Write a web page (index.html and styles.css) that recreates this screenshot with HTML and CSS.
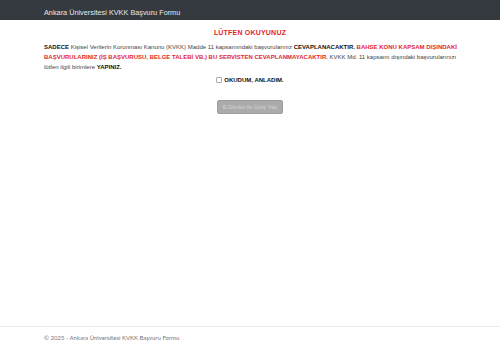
FILE: index.html
```html
<!DOCTYPE html>
<html lang="tr">
<head>
  <meta charset="UTF-8">
  <meta name="viewport" content="width=device-width, initial-scale=1.0">
  <title>Ankara Üniversitesi KVKK Başvuru Formu</title>
  <link rel="stylesheet" href="styles.css">
</head>
<body>

<header class="topbar">
  <div class="wrap">
    <a href="#" class="brand">Ankara Üniversitesi KVKK Başvuru Formu</a>
  </div>
</header>

<main class="wrap content">
  <h1 class="notice-title">LÜTFEN OKUYUNUZ</h1>
  <p class="notice">
    <b>SADECE</b> Kişisel Verilerin Korunması Kanunu (KVKK) Madde 11 kapsamındaki başvurularınız <b>CEVAPLANACAKTIR.</b>
    <b class="red">BAHSE KONU KAPSAM DIŞINDAKİ BAŞVURULARINIZ (İŞ BAŞVURUSU, BELGE TALEBİ VB.) BU SERVİSTEN CEVAPLANMAYACAKTIR.</b>
    KVKK Md. 11 kapsamı dışındaki başvurularınızı lütfen ilgili birimlere <b>YAPINIZ.</b>
  </p>

  <div class="confirm">
    <label><span class="box"></span>OKUDUM, ANLADIM.</label>
  </div>

  <div class="actions">
    <button class="btn-login" disabled>E-Devlet ile Giriş Yap</button>
  </div>
</main>

<footer class="footer">
  <div class="wrap">© 2025 - Ankara Üniversitesi KVKK Başvuru Formu</div>
</footer>

</body>
</html>
```

FILE: styles.css
```css
:root {
  --dark: #343a40;
  --red: #e3262b;
  --text-main: #222;
}

html, body {
  height: 100%;
}

body {
  margin: 0;
  font-family: 'Liberation Sans', Arial, sans-serif;
  color: var(--text-main);
  background: #fff;
  display: flex;
  flex-direction: column;
}

.wrap {
  width: 412px;
  margin: 0 auto;
}

.topbar {
  background-color: var(--dark);
  height: 20px;
  display: flex;
  align-items: center;
}

.brand {
  color: #e6e7e8;
  text-decoration: none;
  font-size: 7.3px;
}

.content {
  flex: 1;
}

.notice-title {
  margin: 8px 0 0;
  text-align: center;
  color: var(--red);
  font-size: 7px;
  line-height: 9px;
  font-weight: bold;
  letter-spacing: 0.2px;
}

.notice {
  margin: 5px -8px 0 0;
  font-size: 6px;
  line-height: 10px;
  color: #444;
}

.notice b {
  color: #111;
}

.notice .red {
  color: var(--red);
}

.confirm {
  margin-top: 4px;
  text-align: center;
  font-size: 6px;
  line-height: 8px;
  font-weight: bold;
  color: #111;
}

.box {
  display: inline-block;
  width: 4px;
  height: 4px;
  border: 0.5px solid #aaa;
  border-radius: 1px;
  margin-right: 2px;
  vertical-align: -0.5px;
}

.actions {
  margin-top: 11px;
  text-align: center;
}

.btn-login {
  width: 66px;
  height: 14px;
  padding: 0;
  border: 1px solid #9c9c9c;
  border-radius: 2px;
  background-color: #ababab;
  color: #d3d3d3;
  font-family: 'Liberation Sans', Arial, sans-serif;
  font-size: 5.8px;
}

.footer {
  border-top: 1px solid #ececec;
  height: 21px;
  display: flex;
  align-items: center;
  font-family: Lato, 'Liberation Sans', sans-serif;
  font-size: 6px;
  color: #777;
}
```
